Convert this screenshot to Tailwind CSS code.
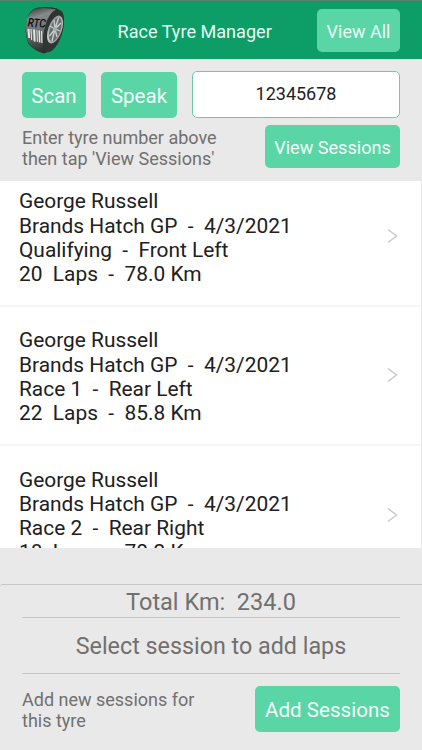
<!DOCTYPE html>
<html lang="en">
<head>
<meta charset="utf-8">
<title>Race Tyre Manager</title>
<script src="https://cdn.jsdelivr.net/npm/@tailwindcss/browser@4"></script>
</head>
<body class="w-[422px] h-[750px] overflow-hidden bg-[#e9e9e9] font-[Roboto,sans-serif] flex flex-col">
<header class="h-[60px] shrink-0 bg-[#0d9d66] border-t border-t-[#58816c] border-b border-b-[#c9f3e3] flex items-start pl-[22px] pr-[22px]">
  <svg class="w-[42px] h-[50px] mt-[4px] shrink-0" viewBox="22 5 42 50">
    <defs>
      <linearGradient id="tread" x1="0.3" y1="0" x2="0.5" y2="1"><stop offset="0" stop-color="#3f4645"/><stop offset=".2" stop-color="#858b8b"/><stop offset=".5" stop-color="#6d7372"/><stop offset="1" stop-color="#292d2c"/></linearGradient>
      <linearGradient id="rim" x1="0" y1="0" x2="1" y2="1"><stop offset="0" stop-color="#7c8281"/><stop offset=".55" stop-color="#c9cdcd"/><stop offset="1" stop-color="#858585"/></linearGradient>
    </defs>
    <path d="M36 8Q47 6 57 8.500Q64 12 63.800 23Q63 35 57 44Q51 52 44 53.500Q34 51 28 43Q24 32 27 19Q30 10 36 8Z" fill="#2b302f"/>
    <path d="M36 8.500Q46 7 56 9.500Q49 13 45.500 25Q42 38 43 52.500Q33 50 28 42Q24.500 32 27 19Q30 11 36 8.500Z" fill="url(#tread)"/>
    <ellipse cx="53.500" cy="31" rx="8.800" ry="22" transform="rotate(17 53.500 31)" fill="#303534"/>
    <ellipse cx="55" cy="29.500" rx="6.800" ry="14.500" transform="rotate(19 55 29.500)" fill="url(#rim)"/>
    <ellipse cx="55.300" cy="29.500" rx="5.300" ry="12.300" transform="rotate(19 55.300 29.500)" fill="#6a706f"/>
    <g stroke="#cdd1d0" stroke-width="1.300" fill="none"><path d="M55 29L58.500 18M55 29L61 23M55 29L60 31M55 29L57 37M55 29L52 41M55 29L49.500 36M55 29L50 26M55 29L54 20"/></g>
    <ellipse cx="55" cy="29" rx="1.800" ry="2.600" fill="#a9aead"/>
    <g fill="#e4e6e6"><path d="M27.500 29h2l.7 9h-2zM30.500 29h1l.7 11h-1zM33 29.500h2l.7 12h-2zM36.500 30h.8l.6 12h-1zM38.500 30.500h1.500l.4 12h-1.500zM41 31h1.200l.3 12h-1.200z"/></g>
    <text x="27.500" y="26.500" font-family="Roboto, sans-serif" font-size="12" font-weight="500" font-style="italic" fill="#080a09" textLength="18" lengthAdjust="spacingAndGlyphs" transform="rotate(4 27.500 26.500)">RTC</text>
  </svg>
  <h1 class="ml-[53.5px] w-[156px] mt-[18.5px] text-[18.1px] leading-[24px] text-[#e4fff5] whitespace-nowrap">Race Tyre Manager</h1>
  <button class="ml-auto mt-[8px] w-[83px] h-[43px] rounded-[5px] bg-[#5ad5a6] text-[#e9fff6] text-[18px] pt-[2px] whitespace-nowrap">View All</button>
</header>
<section class="h-[121px] shrink-0 px-[22px] pt-[11px]">
  <div class="flex">
    <button class="mt-[1px] w-[64px] h-[46px] rounded-[5px] bg-[#5ad5a6] text-[#f2fffa] text-[20.5px] pt-[2px]">Scan</button>
    <button class="mt-[1px] ml-[15px] w-[76px] h-[46px] rounded-[5px] bg-[#5ad5a6] text-[#f2fffa] text-[20.5px] pt-[2px]">Speak</button>
    <div class="ml-[15px] w-[208px] h-[47px] rounded-[5px] bg-white border border-[#6ccba6] text-[#222] text-[18px] flex items-center justify-center pb-[2px]">12345678</div>
  </div>
  <div class="flex justify-between">
    <p class="mt-[8.5px] text-[18px] leading-[21.2px] text-[#707070] whitespace-nowrap">Enter tyre number above<br>then tap 'View Sessions'</p>
    <button class="mt-[7px] w-[135px] h-[43px] rounded-[5px] bg-[#5ad5a6] text-[#f2fffa] text-[18.1px] pt-[3px] whitespace-nowrap">View Sessions</button>
  </div>
</section>
<main class="h-[367px] shrink-0 overflow-hidden bg-white border-r border-r-[#e9e9e9] text-[20.9px] leading-[24.3px] text-[#202020]">
  <ul class="-mt-[13.3px]">
    <li class="h-[139.2px] border-b-2 border-b-[#f6f6f6] flex items-center justify-between pl-[19px] pr-[23px]"><div class="pt-[3px] whitespace-pre">George Russell<br>Brands Hatch GP  -  4/3/2021<br>Qualifying  -  Front Left<br>20  Laps  -  78.0 Km</div><svg class="w-[11px] h-[16px]" viewBox="0 0 11 16" fill="none" stroke="#c9c9c9" stroke-width="1.500"><path d="M1 1.500L9.500 8L1 14.500"/></svg></li>
    <li class="h-[139.2px] border-b-2 border-b-[#f6f6f6] flex items-center justify-between pl-[19px] pr-[23px]"><div class="pt-[3px] whitespace-pre">George Russell<br>Brands Hatch GP  -  4/3/2021<br>Race 1  -  Rear Left<br>22  Laps  -  85.8 Km</div><svg class="w-[11px] h-[16px]" viewBox="0 0 11 16" fill="none" stroke="#c9c9c9" stroke-width="1.500"><path d="M1 1.500L9.500 8L1 14.500"/></svg></li>
    <li class="h-[139.2px] border-b-2 border-b-[#f6f6f6] flex items-center justify-between pl-[19px] pr-[23px]"><div class="pt-[3px] whitespace-pre">George Russell<br>Brands Hatch GP  -  4/3/2021<br>Race 2  -  Rear Right<br>18  Laps  -  70.2 Km</div><svg class="w-[11px] h-[16px]" viewBox="0 0 11 16" fill="none" stroke="#c9c9c9" stroke-width="1.500"><path d="M1 1.500L9.500 8L1 14.500"/></svg></li>
  </ul>
</main>
<footer class="mt-[36px] h-[166px] shrink-0 border-t border-t-[#c9c5c7] rounded-tl-[3px] px-[22px] text-[#707070]">
  <div class="h-[33px] border-b border-b-[#cbc7c9] text-center text-[23.5px] leading-[35px] whitespace-pre">Total Km:  234.0</div>
  <div class="h-[56px] border-b border-b-[#cbc7c9] text-center text-[23.3px] leading-[57px] whitespace-nowrap">Select session to add laps</div>
  <div class="flex justify-between pt-[12px]">
    <p class="mt-[2.5px] text-[18px] leading-[21.2px] whitespace-nowrap">Add new sessions for<br>this tyre</p>
    <button class="w-[145px] h-[46px] rounded-[5px] bg-[#5ad5a6] text-[#f2fffa] text-[20.6px] pt-[2px] whitespace-nowrap">Add Sessions</button>
  </div>
</footer>
</body>
</html>
